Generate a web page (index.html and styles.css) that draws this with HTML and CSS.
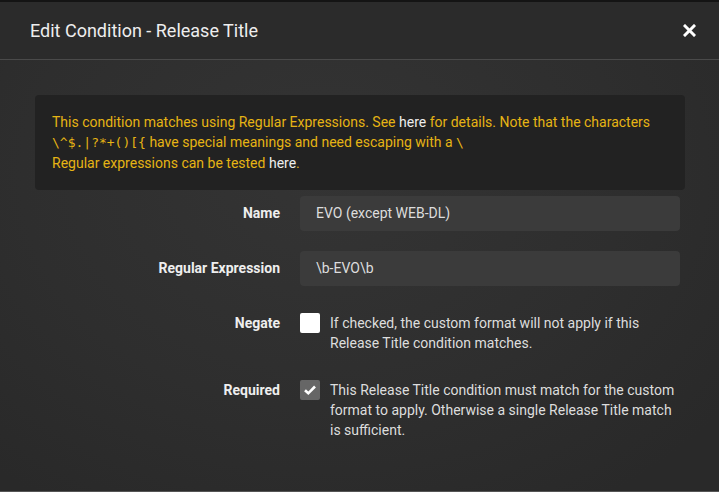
FILE: index.html
```html
<!DOCTYPE html>
<html>
<head>
<meta charset="utf-8">
<link rel="stylesheet" href="styles.css">
</head>
<body>
<div class="modal">
  <div class="modal-header">
    <div class="modal-title">Edit Condition - Release Title</div>
    <button class="close" aria-label="Close">
      <svg width="13" height="13" viewBox="0 0 13 13"><path d="M2 2 L11 11 M11 2 L2 11" stroke="#fff" stroke-width="3" stroke-linecap="square"/></svg>
    </button>
  </div>
  <div class="modal-body">
    <div class="alert">
      This condition matches using Regular Expressions. See <a class="link">here</a> for details. Note that the characters <code>\^$.|?*+()[{</code> have special meanings and need escaping with a <code>\</code><br>
      Regular expressions can be tested <a class="link">here</a>.
    </div>
    <div class="form-row">
      <label class="form-label">Name</label>
      <div class="form-control"><div class="input">EVO (except WEB-DL)</div></div>
    </div>
    <div class="form-row">
      <label class="form-label">Regular Expression</label>
      <div class="form-control"><div class="input">\b-EVO\b</div></div>
    </div>
    <div class="form-row">
      <label class="form-label">Negate</label>
      <div class="form-control check-control">
        <span class="checkbox"></span>
        <span class="help">If checked, the custom format will not apply if this Release Title condition matches.</span>
      </div>
    </div>
    <div class="form-row">
      <label class="form-label">Required</label>
      <div class="form-control check-control">
        <span class="checkbox checked"><svg width="14" height="12" viewBox="0 0 14 12"><path d="M2 6.2 L5.3 9.3 L12 2.5" fill="none" stroke="#fff" stroke-width="2.6"/></svg></span>
        <span class="help">This Release Title condition must match for the custom format to apply. Otherwise a single Release Title match is sufficient.</span>
      </div>
    </div>
  </div>
</div>
</body>
</html>
```

FILE: styles.css
```css
* { box-sizing: border-box; }
html, body { margin: 0; padding: 0; }
body {
  background: #2a2a2a;
  font-family: Roboto, "Liberation Sans", sans-serif;
  font-size: 14px;
  color: #ddd;
  width: 719px;
  height: 492px;
  overflow: hidden;
}
.modal {
  height: 492px;
  border-top: 2px solid #141414;
  border-bottom: 1px solid #555;
  display: flex;
  flex-direction: column;
  background: radial-gradient(ellipse 70% 80% at 45% 35%, #343434 0%, #2e2e2e 60%, #292929 100%);
}
.modal-header {
  height: 58px;
  flex: none;
  display: flex;
  align-items: center;
  justify-content: space-between;
  padding: 0 23px 0 30px;
  background: #2b2b2b;
  border-bottom: 1px solid #4a4a4a;
}
.modal-title {
  font-size: 18px;
  color: #eee;
  padding-bottom: 1px;
}
.close {
  background: none;
  border: 0;
  padding: 0;
  width: 13px;
  height: 13px;
  display: flex;
}
.modal-body {
  flex: 1;
  padding: 35px 34px 0 35px;
}
.alert {
  background: #222;
  border-radius: 4px;
  color: #e6b414;
  line-height: 20px;
  padding: 17px 17px 17px 17px;
  margin-bottom: 6px;
}
.alert code {
  font-family: "DejaVu Sans Mono", "Liberation Mono", monospace;
  font-size: 13px;
}
.link { color: #eee; }
.form-row {
  display: grid;
  grid-template-columns: 245px 380px;
  column-gap: 20px;
  margin-bottom: 20px;
}
.form-label {
  text-align: right;
  font-weight: bold;
  color: #eee;
  line-height: 35px;
}
.input {
  height: 35px;
  line-height: 35px;
  background: #3b3b3b;
  border-radius: 4px;
  padding: 0 16px;
  color: #ddd;
}
.check-control {
  display: flex;
  align-items: flex-start;
  padding-top: 7px;
}
.checkbox {
  flex: none;
  width: 20px;
  height: 20px;
  background: #fff;
  border-radius: 2px;
  margin-right: 10px;
  display: flex;
  align-items: center;
  justify-content: center;
}
.checkbox.checked { background: #666; }
.help {
  line-height: 20px;
  color: #ddd;
}
```
